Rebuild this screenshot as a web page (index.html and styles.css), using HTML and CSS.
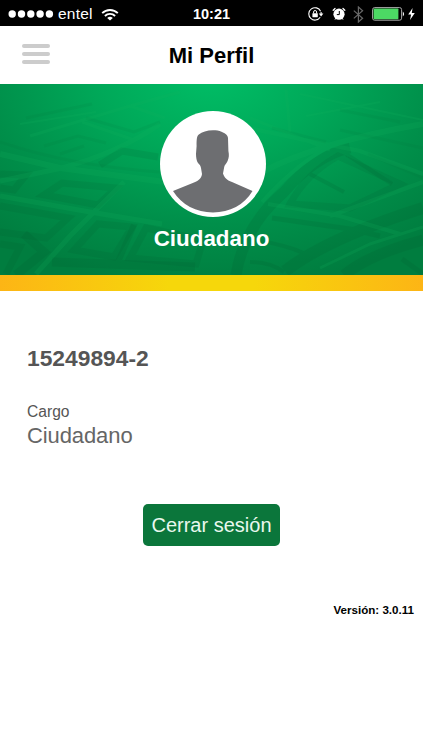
FILE: index.html
```html
<!DOCTYPE html>
<html lang="es">
<head>
  <meta charset="UTF-8" />
  <meta name="viewport" content="width=device-width, initial-scale=1.0"/>
  <title>Mi Perfil</title>
  <link rel="stylesheet" href="styles.css">
</head>
<body>
  <div class="status-bar">
    <div class="carrier">
      <svg width="46" height="10" viewBox="0 0 46 10" fill="#fff">
        <circle cx="4.2" cy="5" r="3.7"/>
        <circle cx="13.5" cy="5" r="3.7"/>
        <circle cx="22.8" cy="5" r="3.7"/>
        <circle cx="32.1" cy="5" r="3.7"/>
        <circle cx="41.4" cy="5" r="3.7"/>
      </svg>
      <span class="carrier-name">entel</span>
      <svg class="wifi" width="18" height="13" viewBox="0 0 18 13" fill="none" stroke="#fff" stroke-width="1.9">
        <path d="M1.2 5.2 A11 11 0 0 1 16.8 5.2"/>
        <path d="M3.9 8 A7.2 7.2 0 0 1 14.1 8"/>
        <path d="M6.2 10 A4 4 0 0 1 11.8 10 L9 12.6 Z" fill="#fff" stroke="none"/>
      </svg>
    </div>
    <span class="time">10:21</span>
    <div class="indicators">
      <svg width="16" height="14" viewBox="0 0 16 14">
        <path d="M12.6 4.2 A6.2 6.2 0 1 0 12.2 10.3" fill="none" stroke="#fff" stroke-width="1.1"/>
        <path d="M10.8 6.6 H15.4 L13.1 9.4 Z" fill="#fff"/>
        <path d="M13.1 7 V5" stroke="#fff" stroke-width="1.1"/>
        <rect x="4.4" y="6.2" width="5.4" height="4" rx=".4" fill="#fff"/>
        <path d="M5.6 6.4 V5 a1.5 1.5 0 0 1 3 0 V6.4" fill="none" stroke="#fff" stroke-width="1"/>
      </svg>
      <svg class="alarm" width="14" height="14" viewBox="0 0 14 14">
        <circle cx="7" cy="7.2" r="5.6" fill="#fff"/>
        <path d="M1.2 3.2 L3 1.5 M12.8 3.2 L11 1.5" stroke="#fff" stroke-width="1.3" stroke-linecap="round"/>
        <path d="M3 12.6 L4 11.4 M11 12.6 L10 11.4" stroke="#fff" stroke-width="1"/>
        <path d="M7.3 4 V7.6 H4.8" fill="none" stroke="#000" stroke-width="1"/>
      </svg>
      <svg class="bluetooth" width="11" height="17" viewBox="0 0 11 17" fill="none" stroke="#686868" stroke-width="1.2">
        <path d="M.8 4.6 L9.6 12.2 L5.4 16 V1 L9.6 4.8 L.8 12.4"/>
      </svg>
      <svg class="battery" width="33" height="14" viewBox="0 0 33 14">
        <rect x=".6" y=".6" width="29" height="12.6" rx="2" fill="#000" stroke="#aaa" stroke-width="1"/>
        <rect x="1.6" y="1.6" width="24.8" height="10.6" rx=".7" fill="#4cd964"/>
        <path d="M30.8 4.4 Q33.4 7 30.8 9.6 Z" fill="#fff"/>
      </svg>
      <svg class="bolt" width="7" height="12" viewBox="0 0 7 12">
        <path d="M4.6 0 L.2 6.6 H3.1 L2 12 L6.8 4.9 H3.8 Z" fill="#fff"/>
      </svg>
    </div>
  </div>

  <header class="navbar">
    <button class="menu" aria-label="Menú">
      <span></span>
      <span></span>
      <span></span>
    </button>
    <h1>Mi Perfil</h1>
  </header>

  <section class="hero">
    <!-- street map pattern -->
    <svg class="streets" width="423" height="191" viewBox="0 0 423 191" fill="none">
      <!-- blocks -->
      <g stroke="#00522a" stroke-width="7" opacity=".11">
        <path d="M44 111 L62 99 L116 104 L98 121 Z"/>
        <path d="M0 122 L68 134 L46 154 L0 148"/>
        <path d="M74 166 L98 140 L132 143 L114 173 Z"/>
        <path d="M130 174 L146 144 L203 156 L196 180 Z"/>
        <path d="M0 160 L20 163 L6 190"/>
        <path d="M100 81 L122 67 L158 73"/>
        <path d="M0 90 L26 91 L14 106 L0 104"/>
        <path d="M290 120 Q306 90 338 72 L400 100 L350 124 Z"/>
      </g>
      <!-- wide roads -->
      <g stroke="#005a2e" opacity=".15">
        <path d="M52 178 L195 183" stroke-width="9"/>
        <path d="M24 150 L44 168 L16 191" stroke-width="9"/>
        <path d="M134 141 L118 178" stroke-width="6"/>
        <path d="M236 191 Q244 142 284 108 Q315 72 350 64" stroke-width="11"/>
        <path d="M285 187 Q328 154 423 124" stroke-width="12"/>
        <path d="M344 191 Q370 170 423 156" stroke-width="11"/>
        <path d="M272 134 L350 145 L380 152" stroke-width="5"/>
        <path d="M310 90 L344 108" stroke-width="4"/>
        <path d="M346 70 L392 100" stroke-width="4"/>
        <path d="M402 175 L423 190" stroke-width="5"/>
        <path d="M252 156 Q284 160 306 170" stroke-width="4"/>
        <path d="M250 178 Q270 178 284 188" stroke-width="4"/>
      </g>
      <!-- fine shading in the far streets -->
      <g stroke="#006d38" stroke-width="3" opacity=".09">
        <path d="M44 62 L78 52 L106 59"/>
        <path d="M60 70 L84 62"/>
        <path d="M86 34 L134 48 L160 38"/>
        <path d="M26 34 L92 20"/>
        <path d="M0 58 Q70 82 160 88"/>
        <path d="M272 44 L326 58"/>
        <path d="M340 46 L423 64"/>
        <path d="M340 26 L400 38"/>
        <path d="M368 70 L423 94"/>
      </g>
      <!-- lit streets -->
      <g stroke="#13b35f" opacity=".18">
        <path d="M0 70 L60 84 L165 98" stroke-width="6"/>
        <path d="M0 97 L62 84 Q120 68 160 40" stroke-width="5"/>
        <path d="M0 112 L90 128 L162 140" stroke-width="5"/>
        <path d="M124 98 L70 152 L36 190" stroke-width="5"/>
        <path d="M82 38 L134 56" stroke-width="3"/>
        <path d="M30 52 L70 40 L130 22 L180 8" stroke-width="3"/>
        <path d="M20 40 L96 28" stroke-width="2"/>
        <path d="M130 22 L165 34" stroke-width="3"/>
        <path d="M230 40 L300 55 L360 67 L423 90" stroke-width="4"/>
        <path d="M262 88 Q320 58 423 40" stroke-width="6"/>
        <path d="M262 118 Q300 76 335 60" stroke-width="4"/>
        <path d="M268 120 L340 132 L400 150" stroke-width="4"/>
        <path d="M330 132 L423 98" stroke-width="4"/>
        <path d="M320 184 L370 160 L423 143" stroke-width="3"/>
        <path d="M286 6 L290 48" stroke-width="3"/>
        <path d="M250 34 L330 66" stroke-width="3"/>
        <path d="M300 10 L423 36" stroke-width="2"/>
        <path d="M306 32 L380 18" stroke-width="2"/>
      </g>
    </svg>
    <svg class="avatar" width="106" height="106" viewBox="0 0 106 106">
      <circle cx="53" cy="53" r="53" fill="#fff"/>
      <path d="M53 19.2 C47 19.2 42 20.8 38.8 23.5 C36.5 25.3 36.6 30 36.6 35 L36 43 C36 46.5 36.6 50 38 52 C39.8 53.5 40.6 55 41 57 L42 63 C41.5 67 39 69.5 34 71.5 L13 80 C22 94 36 101.4 53 101.4 C70 101.4 84 94 92.5 80 L72 71 C66.5 69 64.4 66.5 63 62.5 L64.2 56 C64.5 54 66.5 52.5 67.6 50 C69 46.5 69.2 44 68.4 40 L68 27 C67.8 23.5 64 22 61.5 20.8 C59 19.5 56.5 19.2 53 19.2 Z" fill="#6d6e71"/>
    </svg>
    <h2>Ciudadano</h2>
  </section>
  <div class="stripe"></div>

  <main class="profile">
    <p class="rut">15249894-2</p>
    <p class="label">Cargo</p>
    <p class="value">Ciudadano</p>
    <button class="logout">Cerrar sesión</button>
    <p class="version">Versión: 3.0.11</p>
  </main>
</body>
</html>
```
FILE: styles.css
```css
* {
  box-sizing: border-box;
}

body {
  margin: 0;
  font-family: "Liberation Sans", Arial, sans-serif;
  background: #fff;
  color: #555;
}

h1, h2, p {
  margin: 0;
}

svg {
  display: block;
}

.status-bar {
  display: grid;
  grid-template-columns: 1fr auto 1fr;
  align-items: center;
  height: 26px;
  padding: 1px 8px 0;
  background: #000;
  color: #fff;
}

.carrier {
  display: flex;
  align-items: center;
}

.carrier-name {
  margin-left: 4px;
  font-size: 15.5px;
  line-height: 26px;
  letter-spacing: 0.2px;
}

.wifi {
  margin-left: 8px;
}

.time {
  font-size: 14.5px;
  font-weight: bold;
}

.indicators {
  display: flex;
  align-items: center;
  justify-content: flex-end;
}

.alarm {
  margin-left: 8px;
}

.bluetooth {
  margin-left: 7px;
}

.battery {
  margin-left: 8px;
}

.bolt {
  margin-left: 3px;
}

.navbar {
  display: grid;
  grid-template-columns: 1fr auto 1fr;
  align-items: center;
  height: 58px;
  padding: 2px 22px 0;
}

.menu {
  display: flex;
  flex-direction: column;
  gap: 4px;
  width: 28px;
  padding: 0;
  margin-top: -5px;
  background: none;
  border: none;
  cursor: pointer;
}

.menu span {
  height: 4px;
  border-radius: 2px;
  background: #ccc;
}

.navbar h1 {
  font-size: 22px;
  line-height: 26px;
  color: #000;
}

.hero {
  position: relative;
  display: flex;
  flex-direction: column;
  align-items: center;
  height: 191px;
  padding-top: 27px;
  overflow: hidden;
  background: radial-gradient(ellipse 320px 215px at 50% -10px, #00be66 0%, #00a959 35%, #008f4a 70%, #007d3f 100%);
}

/* sits under the avatar and name */
.streets {
  position: absolute;
  top: 0;
  left: 0;
}

.avatar,
.hero h2 {
  position: relative;
}

.avatar {
  margin-left: 2px;
}

.hero h2 {
  margin-top: 9px;
  font-size: 22.4px;
  line-height: 26px;
  color: #fff;
}

.stripe {
  height: 16px;
  background: linear-gradient(to right, #fdb515, #f6d70b 40%, #f6d70b 60%, #fdb515);
}

.profile {
  display: flex;
  flex-direction: column;
  padding: 53px 9px 0 27px;
}

.rut {
  font-size: 22.8px;
  font-weight: bold;
  line-height: 28px;
}

.label {
  margin-top: 29px;
  font-size: 15.6px;
  line-height: 22px;
}

.value {
  font-size: 22px;
  line-height: 26px;
  letter-spacing: -0.1px;
  color: #666;
}

.logout {
  width: 137px;
  height: 42px;
  margin: 55px 0 0 116px;
  padding: 0;
  border: none;
  border-radius: 5px;
  background: #0b763b;
  color: #e9f8ee;
  font-family: inherit;
  font-size: 20px;
  cursor: pointer;
}

.version {
  margin-top: 57px;
  font-size: 11.6px;
  font-weight: bold;
  line-height: 14px;
  text-align: right;
  color: #000;
}
```
